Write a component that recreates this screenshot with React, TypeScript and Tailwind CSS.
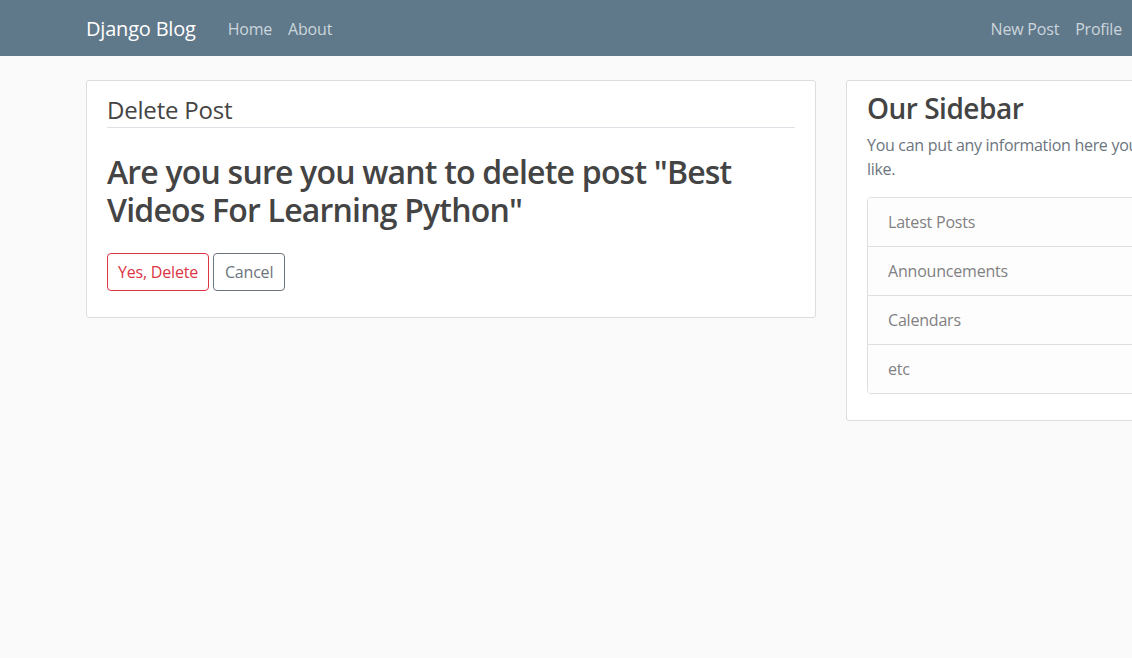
const sidebarLinks = ['Latest Posts', 'Announcements', 'Calendars', 'etc'];

function Navbar() {
  return (
    <header className="h-14 w-full bg-[#5f788a]">
      <nav className="flex h-full items-center pl-[86px] pr-[2px] pt-px">
        <a className="mr-6 text-[20px] leading-[30px] text-white" href="#">
          Django Blog
        </a>
        <div className="flex">
          <a className="px-2 text-base leading-6 text-[#cbd5db]" href="#">Home</a>
          <a className="px-2 text-base leading-6 text-[#cbd5db]" href="#">About</a>
        </div>
        <div className="ml-auto flex">
          <a className="px-2 text-base leading-6 text-[#cbd5db]" href="#">New Post</a>
          <a className="px-2 text-base leading-6 text-[#cbd5db]" href="#">Profile</a>
        </div>
      </nav>
    </header>
  );
}

function DeleteCard() {
  return (
    <section className="mb-5 w-[730px] shrink-0 rounded-[3px] border border-[#dddddd] bg-white px-5 py-[10px]">
      <form onSubmit={(e) => e.preventDefault()}>
        <fieldset className="mb-4">
          <legend className="mb-6 w-full border-b border-[#dee2e6] pt-px text-2xl leading-[35px]">Delete Post</legend>
          <h2 className="mb-2 pt-px text-[32px] font-semibold leading-[38px] tracking-[-0.8px]">
            Are you sure you want to delete post "Best Videos For Learning Python"
          </h2>
        </fieldset>
        <div className="mb-4 flex gap-1">
          <button
            type="submit"
            className="rounded border border-[#dc3545] px-[10px] py-[6px] text-base leading-6 text-[#dc3545]"
          >
            Yes, Delete
          </button>
          <a
            href="#"
            className="rounded border border-[#6c757d] px-[11px] py-[6px] text-base leading-6 text-[#6c757d]"
          >
            Cancel
          </a>
        </div>
      </form>
    </section>
  );
}

function Sidebar() {
  return (
    <aside className="mb-5 w-[350px] shrink-0 rounded-[3px] border border-[#dddddd] bg-white px-5 py-[10px]">
      <h3 className="mb-2 pt-px text-[28px] font-semibold leading-[33px] tracking-[-0.5px]">Our Sidebar</h3>
      <p className="mb-4 text-base leading-6 tracking-[-0.3px] text-[#6c757d]">
        You can put any information here you'd like.
      </p>
      <ul className="mb-4 overflow-hidden rounded border border-[#dfdfdf]">
        {sidebarLinks.map((item, i) => (
          <li
            key={item}
            className={`bg-[#fdfdfe] px-5 py-3 text-base leading-6 text-[#818182] ${i > 0 ? 'border-t border-[#dfdfdf]' : ''}`}
          >
            {item}
          </li>
        ))}
      </ul>
    </aside>
  );
}

export default function App() {
  return (
    <div
      className="min-h-[658px] w-full overflow-hidden bg-[#fafafa] tracking-[-0.2px] text-[#444444]"
      style={{ fontFamily: '"Open Sans", "Liberation Sans", sans-serif' }}
    >
      <Navbar />
      <main className="flex items-start gap-[30px] pl-[86px] pt-6">
        <DeleteCard />
        <Sidebar />
      </main>
    </div>
  );
}
